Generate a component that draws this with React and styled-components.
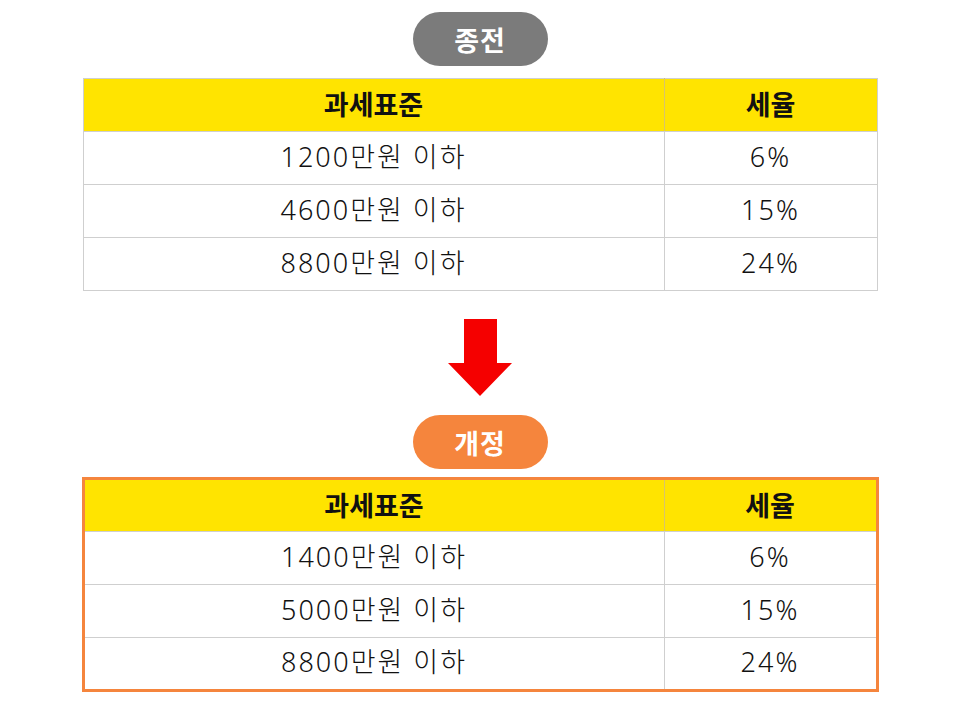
import React from "react";
import styled, { createGlobalStyle } from "styled-components";

const GlobalStyle = createGlobalStyle`
  body {
    margin: 0;
    background: #fff;
    font-family: "Noto Sans", "Noto Sans CJK KR", sans-serif;
  }
`;

const Page = styled.div`
  width: 960px;
  height: 720px;
  display: flex;
  flex-direction: column;
  align-items: center;
  padding-top: 12px;
  box-sizing: border-box;
`;

const Pill = styled.div`
  width: 135px;
  height: 54px;
  border-radius: 27px;
  background: ${(p) => p.$color};
  color: #fff;
  display: flex;
  align-items: center;
  justify-content: center;
  font-family: "Noto Sans CJK KR", sans-serif;
  font-size: 27px;
  font-weight: 700;
  line-height: 1;
  letter-spacing: 1px;
`;

const Table = styled.table`
  width: ${(p) => (p.$accent ? "797px" : "795px")};
  margin-top: ${(p) => p.$gap}px;
  border-collapse: collapse;
  border: ${(p) => (p.$accent ? "3px solid #f5853d" : "1px solid #cfcfcf")};
  font-family: "Noto Sans", "Noto Sans CJK KR", sans-serif;
  color: #111;
`;

const HeadCell = styled.th`
  background: #ffe400;
  height: 53px;
  padding: 0 0 3px;
  box-sizing: border-box;
  font-family: "Noto Sans CJK KR", sans-serif;
  font-size: 27px;
  font-weight: 700;
  line-height: 1;
  text-align: center;
  border-right: 1px solid #d8c46a;
  border-bottom: 1px solid #cfcfcf;
  width: ${(p) => p.$w || "auto"};
  &:last-child {
    border-right: none;
  }
`;

const Cell = styled.td`
  height: 53px;
  padding: 0 0 4px;
  box-sizing: border-box;
  font-size: 27px;
  font-weight: 300;
  line-height: 1;
  text-align: center;
  letter-spacing: 2px;
  border-right: 1px solid #cfcfcf;
  border-bottom: 1px solid #cfcfcf;
  &:last-child {
    border-right: none;
  }
`;

const Arrow = styled.svg`
  display: block;
  margin-top: 28px;
  margin-bottom: 19px;
`;

const before = [
  ["1200만원 이하", "6%"],
  ["4600만원 이하", "15%"],
  ["8800만원 이하", "24%"],
];

const after = [
  ["1400만원 이하", "6%"],
  ["5000만원 이하", "15%"],
  ["8800만원 이하", "24%"],
];

const TaxTable = ({ rows, accent, gap }) => (
  <Table $accent={accent} $gap={gap}>
    <thead>
      <tr>
        <HeadCell $w="581px">과세표준</HeadCell>
        <HeadCell>세율</HeadCell>
      </tr>
    </thead>
    <tbody>
      {rows.map(([base, rate]) => (
        <tr key={base}>
          <Cell>{base}</Cell>
          <Cell>{rate}</Cell>
        </tr>
      ))}
    </tbody>
  </Table>
);

export default function App() {
  return (
    <>
      <GlobalStyle />
      <Page>
        <Pill $color="#7b7b7b">종전</Pill>
        <TaxTable rows={before} gap={12} />
        <Arrow width="64" height="77" viewBox="0 0 64 77">
          <polygon points="16,0 49,0 49,44 64,44 32,77 0,44 16,44" fill="#f50000" />
        </Arrow>
        <Pill $color="#f5853d">개정</Pill>
        <TaxTable rows={after} accent gap={8} />
      </Page>
    </>
  );
}
